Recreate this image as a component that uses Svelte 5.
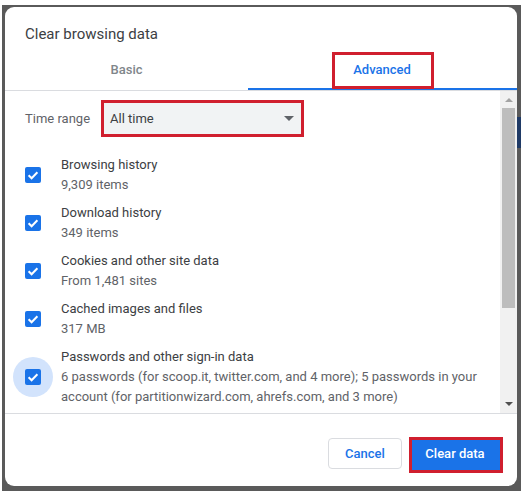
<script>
  const items = [
    { title: 'Browsing history', sub: '9,309 items' },
    { title: 'Download history', sub: '349 items' },
    { title: 'Cookies and other site data', sub: 'From 1,481 sites' },
    { title: 'Cached images and files', sub: '317 MB' },
    { title: 'Passwords and other sign-in data', sub: '6 passwords (for scoop.it, twitter.com, and 4 more); 5 passwords in your account (for partitionwizard.com, ahrefs.com, and 3 more)', focus: true }
  ];
</script>

<div class="page">
  <div class="backdrop">
    <i class="behind"></i>
    <div class="dialog">
      <h1>Clear browsing data</h1>
      <div class="tabs">
        <div class="tab">Basic</div>
        <div class="tab active"><span class="mark adv">Advanced</span></div>
      </div>
      <div class="body">
        <div class="list">
          <div class="range">
            <span class="label">Time range</span>
            <div class="select mark">
              <span>All time</span>
              <i class="caret"></i>
            </div>
          </div>
          {#each items as item}
            <div class="row">
              <div class="check" class:focus={item.focus}>
                <svg viewBox="0 0 16 16" width="16" height="16">
                  <rect width="16" height="16" rx="2" fill="#1a73e8" />
                  <path d="M3.6 8.2l3 3 5.8-6" fill="none" stroke="#fff" stroke-width="2" />
                </svg>
              </div>
              <div class="text">
                <div class="title">{item.title}</div>
                <div class="sub">{item.sub}</div>
              </div>
            </div>
          {/each}
        </div>
        <div class="scrollbar">
          <i class="arrow up"></i>
          <div class="thumb"></div>
          <i class="arrow down"></i>
        </div>
      </div>
      <div class="footer">
        <button class="cancel">Cancel</button>
        <button class="primary">Clear data</button>
      </div>
    </div>
  </div>
</div>

<style>
  :global(body) {
    margin: 0;
    background: #fff;
  }
  .page {
    height: 491px;
    padding: 5px 0 0 2px;
    box-sizing: border-box;
    font-family: Roboto, "Liberation Sans", sans-serif;
    overflow: hidden;
  }
  .backdrop {
    position: relative;
    height: 486px;
    background: #5a5a5a;
    padding: 2px 4px 0 3px;
    box-sizing: border-box;
  }
  .behind {
    position: absolute;
    right: 0;
    top: 112px;
    width: 4px;
    height: 31px;
    background: #1f3a66;
  }
  .dialog {
    height: 479px;
    background: #fff;
    border-radius: 9px;
    display: flex;
    flex-direction: column;
    overflow: hidden;
  }
  h1 {
    margin: 0;
    padding: 18px 0 0 20px;
    height: 25px;
    font-size: 15px;
    line-height: 18px;
    font-weight: 400;
    color: #3c4043;
  }
  .tabs {
    display: flex;
    height: 41px;
    box-sizing: border-box;
    border-bottom: 1px solid #dadce0;
  }
  .tab {
    width: 243px;
    height: 38px;
    display: flex;
    align-items: center;
    justify-content: center;
    font-size: 13px;
    font-weight: 500;
    color: #80868b;
  }
  .tab.active {
    flex: 1;
    color: #1a73e8;
    box-shadow: inset 0 -2px 0 #1a73e8;
    height: 40px;
    box-sizing: border-box;
    justify-content: flex-start;
    padding-left: 84px;
    align-items: flex-start;
    padding-top: 2px;
  }
  .mark {
    border: 3px solid #d01f2e;
    box-sizing: border-box;
  }
  .adv {
    display: flex;
    align-items: center;
    justify-content: center;
    width: 102px;
    height: 37px;
    padding: 0 2px 2px 0;
  }
  .body {
    height: 323px;
    flex: none;
    display: flex;
    box-sizing: border-box;
    border-bottom: 1px solid #dadce0;
  }
  .list {
    flex: 1;
    padding: 9px 0 0 20px;
    overflow: hidden;
  }
  .range {
    display: flex;
    align-items: center;
    height: 37px;
    margin-bottom: 18px;
  }
  .label {
    width: 76px;
    font-size: 13px;
    color: #5f6368;
  }
  .select {
    width: 203px;
    height: 37px;
    background: #f1f3f4;
    display: flex;
    align-items: center;
    justify-content: space-between;
    padding: 0 7px 0 6px;
    font-size: 13px;
    color: #3c4043;
  }
  .caret {
    width: 0;
    height: 0;
    border-left: 5.5px solid transparent;
    border-right: 5.5px solid transparent;
    border-top: 5px solid #5f6368;
  }
  .row {
    display: flex;
    align-items: center;
    min-height: 40px;
    margin-bottom: 8px;
  }
  .check {
    position: relative;
    width: 16px;
    height: 16px;
    flex: none;
    margin-right: 20px;
    line-height: 0;
  }
  .check svg {
    position: relative;
  }
  .check.focus::before {
    content: "";
    position: absolute;
    left: -12px;
    top: -12px;
    width: 40px;
    height: 40px;
    border-radius: 50%;
    background: #d2e3fc;
  }
  .text {
    width: 426px;
  }
  .title {
    font-size: 13px;
    line-height: 20px;
    color: #3c4043;
  }
  .sub {
    font-size: 13px;
    line-height: 20px;
    color: #5f6368;
  }
  .scrollbar {
    flex: none;
    width: 17px;
    background: #f1f1f1;
    display: flex;
    flex-direction: column;
    align-items: center;
  }
  .arrow {
    flex: none;
    width: 0;
    height: 0;
    border-left: 4px solid transparent;
    border-right: 4px solid transparent;
  }
  .arrow.up {
    border-bottom: 4px solid #a3a3a3;
    margin: 7px 0 6px;
  }
  .arrow.down {
    border-top: 4px solid #505050;
    margin: auto 0 7px;
  }
  .thumb {
    width: 13px;
    height: 200px;
    background: #bdbdbd;
  }
  .footer {
    flex: none;
    height: 72px;
    box-sizing: border-box;
    display: flex;
    justify-content: flex-end;
    align-items: flex-start;
    padding: 23px 14px 0 0;
    gap: 7px;
  }
  button {
    font-family: inherit;
    font-size: 13px;
    font-weight: 500;
    border-radius: 4px;
    box-sizing: border-box;
    padding: 0;
  }
  .cancel {
    width: 74px;
    height: 31px;
    margin-top: 1px;
    background: #fff;
    border: 1px solid #dadce0;
    color: #1a73e8;
  }
  .primary {
    width: 94px;
    height: 36px;
    padding: 0 2px 4px 0;
    background: #1a73e8;
    color: #fff;
    border: 3px solid #d01f2e;
    border-radius: 0;
  }
</style>
